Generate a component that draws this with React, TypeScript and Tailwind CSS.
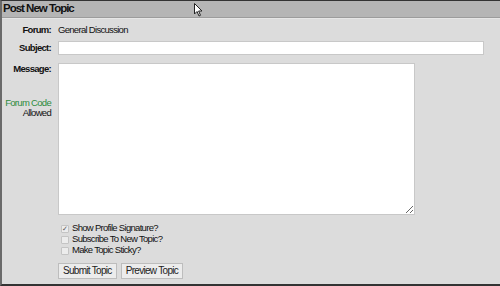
import { useState } from 'react'

const font = { fontFamily: '"Liberation Sans", Arial, sans-serif' }

const Check = ({ checked, label }: { checked?: boolean; label: string }) => (
  <div className="flex items-center h-[11px]">
    <span className="ml-[3px] w-[8px] h-[8px] border border-[#c4c4c4] bg-[#ececec] rounded-[1px] flex items-center justify-center text-[7px] leading-none text-[#555]">
      {checked ? '✓' : ''}
    </span>
    <span className="ml-[3px] text-[9.5px] tracking-[-0.7px] text-[#111] whitespace-nowrap">{label}</span>
  </div>
)

export default function App() {
  const [subject, setSubject] = useState('')
  const [message, setMessage] = useState('')

  return (
    <div
      className="relative w-[500px] h-[286px] overflow-hidden bg-[#dcdcdc] border-t border-[#333] border-b-2 border-b-[#333] border-l-2 border-l-[#6a6a6a] flex flex-col"
      style={font}
    >
      {/* header bar */}
      <div className="h-[17px] bg-[#b5b5b5] border-b border-[#9c9c9c] flex items-center pl-[1px]">
        <h1 className="text-[11.5px] font-bold tracking-[-1px] text-[#111]">Post New Topic</h1>
      </div>
      <div className="h-px bg-[#e6e6e6]" />

      <div className="grid grid-cols-[49px_1fr] gap-x-[7px] pt-[2px] text-[9.5px] tracking-[-0.7px] text-[#111]">
        <div className="text-right font-bold h-[18px] leading-[18px] whitespace-nowrap">Forum:</div>
        <div className="h-[18px] leading-[18px] whitespace-nowrap">General Discussion</div>

        <div className="text-right font-bold mt-[2px] h-[14px] leading-[14px] whitespace-nowrap">Subject:</div>
        <div className="mt-[2px]">
          <input
            value={subject}
            onChange={(e) => setSubject(e.target.value)}
            className="block w-[426px] h-[14px] bg-white border border-[#c8c8c8] outline-none"
          />
        </div>

        <div className="text-right mt-[8px] flex flex-col whitespace-nowrap">
          <span className="font-bold leading-[12px]">Message:</span>
          <span className="mt-[23px] leading-[10px] text-[#2e8b3c]">Forum Code</span>
          <span className="leading-[10px]">Allowed</span>
        </div>
        <div className="mt-[8px]">
          <textarea
            value={message}
            onChange={(e) => setMessage(e.target.value)}
            className="block w-[357px] h-[152px] bg-white border border-[#c8c8c8] outline-none"
          />
        </div>

        <div />
        <div className="mt-[8px] flex flex-col">
          <Check checked label="Show Profile Signature?" />
          <Check label="Subscribe To New Topic?" />
          <Check label="Make Topic Sticky?" />
        </div>

        <div />
        <div className="mt-[7px] flex gap-[4px]">
          <button className="h-[16px] px-[4px] bg-[#ececec] border border-[#bdbdbd] text-[10px] tracking-[-0.7px] text-[#222] leading-none">
            Submit Topic
          </button>
          <button className="h-[16px] px-[4px] bg-[#ececec] border border-[#bdbdbd] text-[10px] tracking-[-0.7px] text-[#222] leading-none">
            Preview Topic
          </button>
        </div>
      </div>

      {/* mouse pointer */}
      <svg className="absolute left-[192px] top-[2px]" width="9" height="14" viewBox="0 0 9 14">
        <path d="M0.5 0.5 L0.5 11 L3 8.5 L5 13 L6.5 12.3 L4.6 8 L8 8 Z" fill="#fff" stroke="#222" strokeWidth="1" />
      </svg>
    </div>
  )
}
